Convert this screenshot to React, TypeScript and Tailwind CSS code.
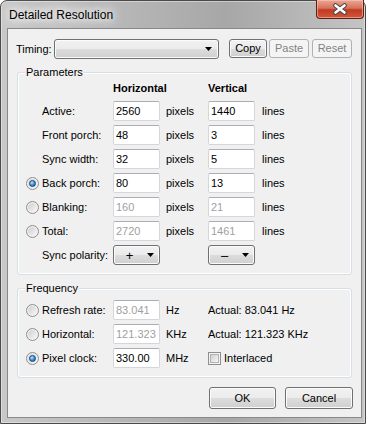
import React from "react";

const ui = "font-['Liberation_Sans',Arial,sans-serif] text-[11px] text-black";

const btn =
  "flex items-center rounded-[3px] border border-[#707070] bg-[linear-gradient(to_bottom,#f2f2f2_0%,#ebebeb_50%,#dddddd_50%,#cfcfcf_100%)] shadow-[inset_0_0_0_1px_#fbfbfb]";
const btnOff =
  "flex items-center justify-center rounded-[3px] border border-[#adb2b5] bg-[#f4f4f4] text-[#838383]";

function Arrow() {
  return (
    <svg width="7" height="4" viewBox="0 0 7 4">
      <path d="M0 0h7L3.5 4z" fill="#000" />
    </svg>
  );
}

function Radio({ checked = false }: { checked?: boolean }) {
  return (
    <span className="flex h-[13px] w-[13px] shrink-0 items-center justify-center rounded-full border border-[#8f8f8f] bg-[linear-gradient(135deg,#cfcfcf,#f8f8f8)] shadow-[inset_0_0_0_1px_#f3f3f3]">
      {checked ? (
        <span className="h-[7px] w-[7px] rounded-full border border-[#17457c] bg-[radial-gradient(circle_at_35%_30%,#b5e6ff,#3a8fd8_55%,#12498a)]" />
      ) : (
        <span className="h-[7px] w-[7px] rounded-full bg-[linear-gradient(135deg,#d2d2d2,#f4f4f4)]" />
      )}
    </span>
  );
}

function Check() {
  return (
    <span className="flex h-[13px] w-[13px] shrink-0 items-center justify-center border border-[#8f8f8f] bg-[#f4f4f4]">
      <span className="h-[9px] w-[9px] border border-[#b3b3b3] bg-[linear-gradient(135deg,#cfcfcf,#f7f7f7)]" />
    </span>
  );
}

function Field({ value, disabled }: { value: string; disabled?: boolean }) {
  return (
    <input
      readOnly
      disabled={disabled}
      value={value}
      className={`h-[20px] w-[47px] shrink-0 rounded-[2px] border border-[#d3d6db] border-t-[#abadb3] bg-white pl-[2px] outline-none ${
        disabled ? "text-[#a0a0a0]" : "text-black"
      }`}
    />
  );
}

function Combo({ text }: { text: string }) {
  return (
    <div className={`${btn} h-[20px] w-[47px] shrink-0 justify-between pl-[11px] pr-[5px]`}>
      <span className="w-[9px] text-center text-[13px] leading-none">{text}</span>
      <Arrow />
    </div>
  );
}

function Group({
  title,
  className,
  children,
}: {
  title: string;
  className: string;
  children: React.ReactNode;
}) {
  return (
    <div
      className={`relative ml-[9px] w-[335px] rounded-[3px] border border-[#d5dfe5] shadow-[inset_0_0_0_1px_#fff] ${className}`}
    >
      <span className="absolute -top-[8px] left-[7px] bg-[#f0f0f0] px-[1px] leading-[14px]">
        {title}
      </span>
      {children}
    </div>
  );
}

const params = [
  { radio: undefined, label: "Active:", h: "2560", v: "1440", off: false },
  { radio: undefined, label: "Front porch:", h: "48", v: "3", off: false },
  { radio: undefined, label: "Sync width:", h: "32", v: "5", off: false },
  { radio: true, label: "Back porch:", h: "80", v: "13", off: false },
  { radio: false, label: "Blanking:", h: "160", v: "21", off: true },
  { radio: false, label: "Total:", h: "2720", v: "1461", off: true },
];

const freq = [
  { checked: false, label: "Refresh rate:", value: "83.041", unit: "Hz", off: true, actual: "Actual: 83.041 Hz" },
  { checked: false, label: "Horizontal:", value: "121.323", unit: "KHz", off: true, actual: "Actual: 121.323 KHz" },
  { checked: true, label: "Pixel clock:", value: "330.00", unit: "MHz", off: false, actual: "" },
];

export default function App() {
  return (
    <div className={`h-[426px] w-[368px] bg-white ${ui}`}>
      <div className="flex h-[424px] w-[366px] flex-col rounded-t-[7px] border border-[#4a4a4a] bg-[linear-gradient(to_right,#c8c8c8,#b3b3b3_40%,#a7a7a7_62%,#c4c4c4)] pb-[5px] pl-[6px] pr-[3px] shadow-[inset_0_0_0_1px_rgba(255,255,255,0.4)]">
        {/* title bar */}
        <div className="flex h-[27px] shrink-0 items-start justify-between">
          <span className="pl-[2px] pt-[7px] text-[12px] leading-[14px] [text-shadow:0_0_8px_#fff,0_0_10px_#fff,0_0_16px_#fff,0_0_20px_#fff]">
            Detailed Resolution
          </span>
          <div className="-mr-[2px] -mt-px flex h-[19px] w-[48px] items-center justify-center rounded-b-[4px] border border-t-0 border-[#5b1f16] bg-[linear-gradient(to_bottom,#e9a896_0%,#d9715a_45%,#c13a22_55%,#d1583c_100%)] shadow-[inset_0_0_0_1px_rgba(255,210,200,0.5)]">
            <svg width="16" height="12" viewBox="0 0 16 12">
              <path d="M3.5 2.5l9 7M12.5 2.5l-9 7" stroke="#474747" strokeWidth="4.6" strokeLinecap="round" />
              <path d="M3.5 2.5l9 7M12.5 2.5l-9 7" stroke="#fff" strokeWidth="2.6" strokeLinecap="round" />
            </svg>
          </div>
        </div>

        {/* client area */}
        <div className="flex flex-1 flex-col border border-[#898989] bg-[#f0f0f0]">
          <div className="mt-[10px] flex items-start pl-[8px]">
            <span className="flex h-[20px] w-[38px] items-center">Timing:</span>
            <div className={`${btn} h-[20px] w-[165px] justify-end pr-[6px]`}>
              <Arrow />
            </div>
            <div className={`${btn} ml-[10px] h-[19px] w-[38px] justify-center`}>Copy</div>
            <div className={`${btnOff} ml-[2px] h-[19px] w-[40px]`}>Paste</div>
            <div className={`${btnOff} ml-[3px] h-[19px] w-[40px]`}>Reset</div>
          </div>

          <Group title="Parameters" className="mt-[13px] h-[203px] pt-[7px]">
            <div className="flex h-[16px] items-center pl-[95px] font-bold">
              <span className="w-[95px]">Horizontal</span>
              <span>Vertical</span>
            </div>
            <div className="mt-[5px] flex flex-col gap-[4px] pl-[8px]">
              {params.map((r) => (
                <div key={r.label} className="flex h-[20px] items-center">
                  <span className="w-[16px] shrink-0">
                    {r.radio !== undefined && <Radio checked={r.radio} />}
                  </span>
                  <span className="w-[71px] shrink-0">{r.label}</span>
                  <Field value={r.h} disabled={r.off} />
                  <span className="ml-[6px] w-[42px] shrink-0">pixels</span>
                  <Field value={r.v} disabled={r.off} />
                  <span className="ml-[7px]">lines</span>
                </div>
              ))}
              <div className="flex h-[20px] items-center">
                <span className="w-[16px] shrink-0" />
                <span className="w-[71px] shrink-0">Sync polarity:</span>
                <Combo text="+" />
                <span className="w-[48px] shrink-0" />
                <Combo text="–" />
              </div>
            </div>
          </Group>

          <Group title="Frequency" className="mt-[13px] h-[90px] pt-[11px]">
            <div className="flex flex-col gap-[4px] pl-[8px]">
              {freq.map((r) => (
                <div key={r.label} className="flex h-[20px] items-center">
                  <span className="w-[16px] shrink-0">
                    <Radio checked={r.checked} />
                  </span>
                  <span className="w-[71px] shrink-0">{r.label}</span>
                  <Field value={r.value} disabled={r.off} />
                  <span className="ml-[6px] w-[42px] shrink-0">{r.unit}</span>
                  {r.actual ? (
                    <span>{r.actual}</span>
                  ) : (
                    <span className="flex items-center gap-[3px]">
                      <Check />
                      <span>Interlaced</span>
                    </span>
                  )}
                </div>
              ))}
            </div>
          </Group>

          <div className="mt-[9px] flex justify-end gap-[9px] pr-[8px]">
            <div className={`${btn} h-[22px] w-[67px] justify-center border-[#3c7fb1] shadow-[inset_0_0_0_1px_#9fdcfb]`}>OK</div>
            <div className={`${btn} h-[22px] w-[68px] justify-center`}>Cancel</div>
          </div>
        </div>
      </div>
    </div>
  );
}
